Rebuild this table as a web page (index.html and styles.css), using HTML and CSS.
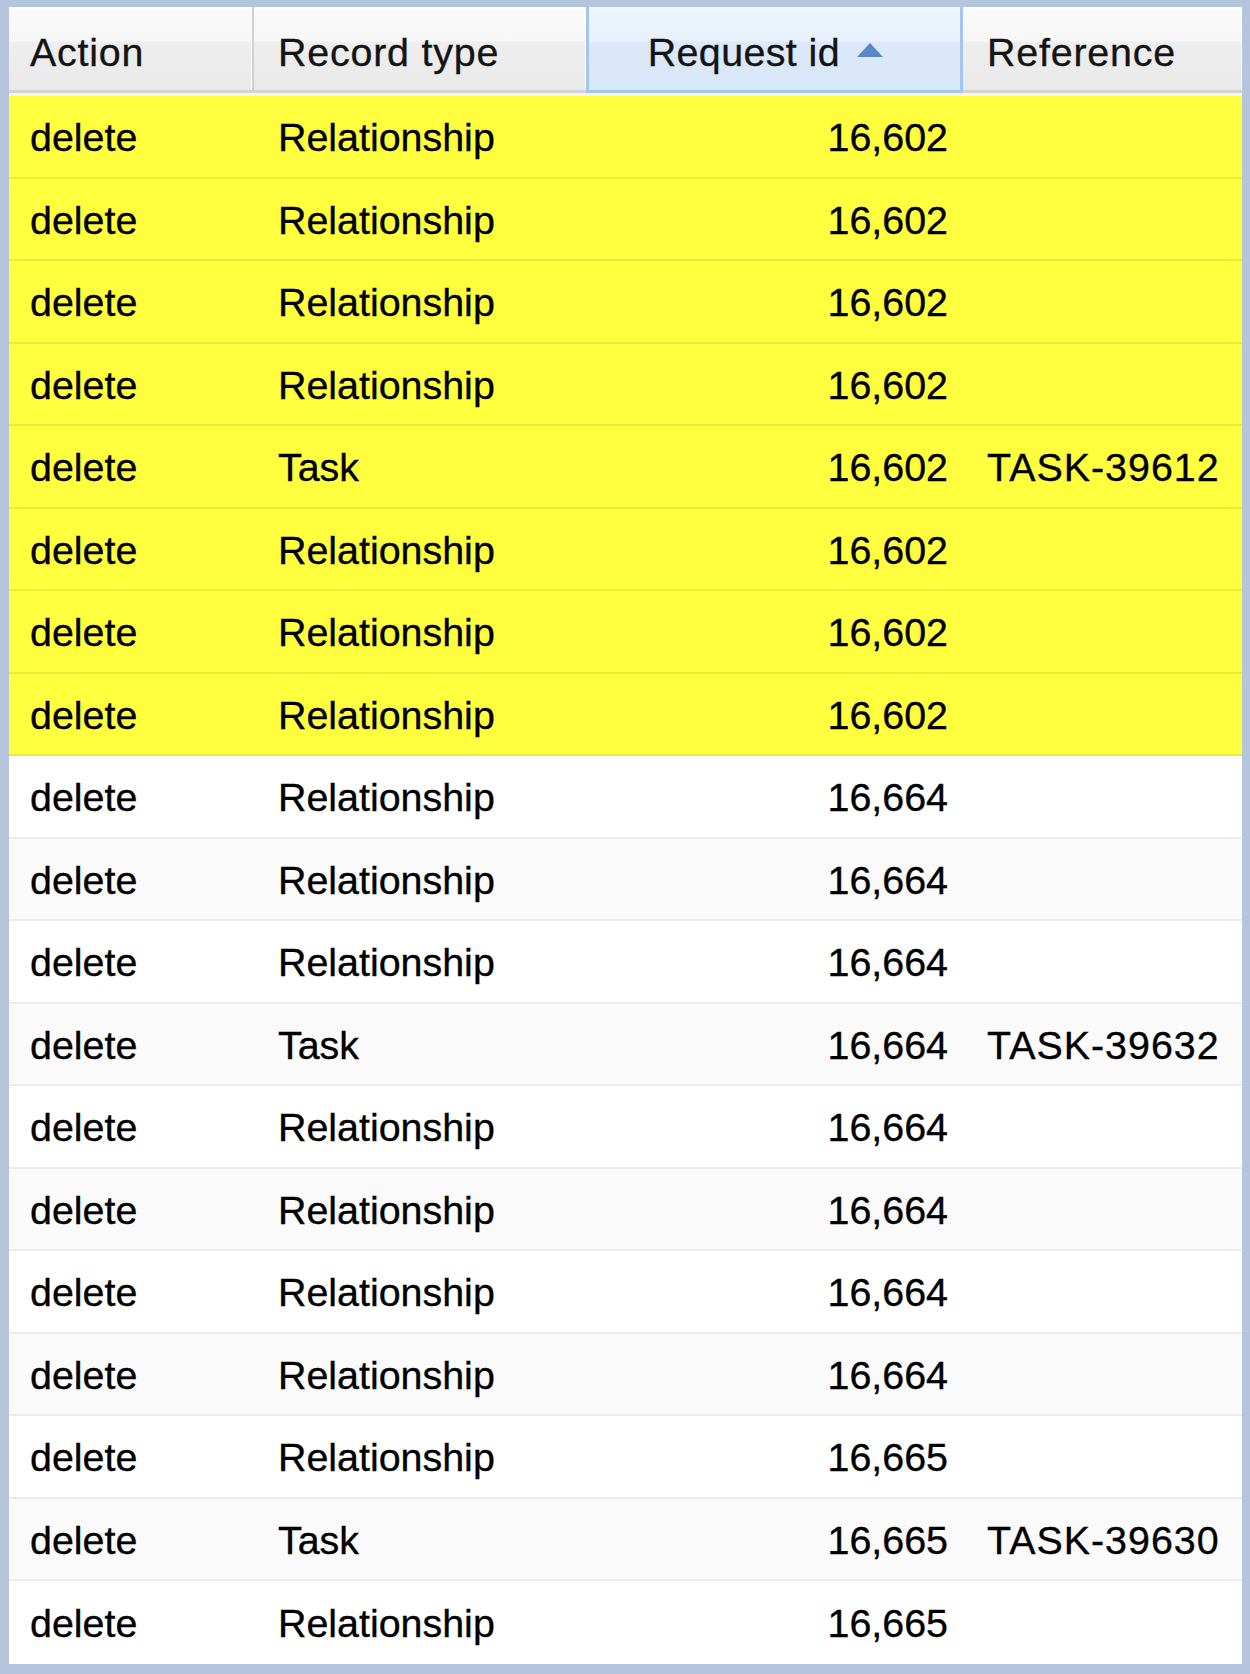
FILE: index.html
```html
<!DOCTYPE html>
<html>
<head>
<meta charset="utf-8">
<link rel="stylesheet" href="styles.css">
</head>
<body>
<div class="grid">
  <div class="header">
    <div class="hcell c-action">Action</div>
    <div class="hcell c-type">Record type</div>
    <div class="hcell c-req sorted">Request id<svg class="sort" width="28" height="16" viewBox="0 0 28 16"><polygon points="14,1 27,15 1,15" fill="#5b87c9"/></svg></div>
    <div class="hcell c-ref last">Reference</div>
  </div>
  <div class="body">
    <div class="row hl"><div class="cell c-action">delete</div><div class="cell c-type">Relationship</div><div class="cell c-req">16,602</div><div class="cell c-ref"></div></div>
    <div class="row hl"><div class="cell c-action">delete</div><div class="cell c-type">Relationship</div><div class="cell c-req">16,602</div><div class="cell c-ref"></div></div>
    <div class="row hl"><div class="cell c-action">delete</div><div class="cell c-type">Relationship</div><div class="cell c-req">16,602</div><div class="cell c-ref"></div></div>
    <div class="row hl"><div class="cell c-action">delete</div><div class="cell c-type">Relationship</div><div class="cell c-req">16,602</div><div class="cell c-ref"></div></div>
    <div class="row hl"><div class="cell c-action">delete</div><div class="cell c-type">Task</div><div class="cell c-req">16,602</div><div class="cell c-ref">TASK-39612</div></div>
    <div class="row hl"><div class="cell c-action">delete</div><div class="cell c-type">Relationship</div><div class="cell c-req">16,602</div><div class="cell c-ref"></div></div>
    <div class="row hl"><div class="cell c-action">delete</div><div class="cell c-type">Relationship</div><div class="cell c-req">16,602</div><div class="cell c-ref"></div></div>
    <div class="row hl"><div class="cell c-action">delete</div><div class="cell c-type">Relationship</div><div class="cell c-req">16,602</div><div class="cell c-ref"></div></div>
    <div class="row"><div class="cell c-action">delete</div><div class="cell c-type">Relationship</div><div class="cell c-req">16,664</div><div class="cell c-ref"></div></div>
    <div class="row alt"><div class="cell c-action">delete</div><div class="cell c-type">Relationship</div><div class="cell c-req">16,664</div><div class="cell c-ref"></div></div>
    <div class="row"><div class="cell c-action">delete</div><div class="cell c-type">Relationship</div><div class="cell c-req">16,664</div><div class="cell c-ref"></div></div>
    <div class="row alt"><div class="cell c-action">delete</div><div class="cell c-type">Task</div><div class="cell c-req">16,664</div><div class="cell c-ref">TASK-39632</div></div>
    <div class="row"><div class="cell c-action">delete</div><div class="cell c-type">Relationship</div><div class="cell c-req">16,664</div><div class="cell c-ref"></div></div>
    <div class="row alt"><div class="cell c-action">delete</div><div class="cell c-type">Relationship</div><div class="cell c-req">16,664</div><div class="cell c-ref"></div></div>
    <div class="row"><div class="cell c-action">delete</div><div class="cell c-type">Relationship</div><div class="cell c-req">16,664</div><div class="cell c-ref"></div></div>
    <div class="row alt"><div class="cell c-action">delete</div><div class="cell c-type">Relationship</div><div class="cell c-req">16,664</div><div class="cell c-ref"></div></div>
    <div class="row"><div class="cell c-action">delete</div><div class="cell c-type">Relationship</div><div class="cell c-req">16,665</div><div class="cell c-ref"></div></div>
    <div class="row alt"><div class="cell c-action">delete</div><div class="cell c-type">Task</div><div class="cell c-req">16,665</div><div class="cell c-ref">TASK-39630</div></div>
    <div class="row last"><div class="cell c-action">delete</div><div class="cell c-type">Relationship</div><div class="cell c-req">16,665</div><div class="cell c-ref"></div></div>
  </div>
</div>
</body>
</html>
```

FILE: styles.css
```css
html, body {
  margin: 0;
  padding: 0;
  background: #b4c5dd;
}

.grid {
  width: 1250px;
  height: 1674px;
  box-sizing: border-box;
  border-style: solid;
  border-color: #b4c5dd;
  border-width: 7px 8px 10px 9px;
  background: #ffffff;
  font-family: "Liberation Sans", Arial, sans-serif;
  font-size: 39.4px;
  color: #000;
  overflow: hidden;
  -webkit-text-stroke: 0.35px currentColor;
}

.header {
  display: grid;
  grid-template-columns: 245px 334px 375px 1fr;
  height: 89px;
  box-sizing: border-box;
  border-bottom: 3px solid #f4f4f4;
  background: #f4f4f4;
}

.hcell {
  display: flex;
  align-items: center;
  box-sizing: border-box;
  height: 86px;
  padding-top: 7px;
  color: #141414;
  letter-spacing: 0.8px;
  background: linear-gradient(to bottom, #fafafa 0px, #f7f7f7 34px, #eeeeef 35px, #e9e9ea 100%);
  border-bottom: 3px solid #d3d3d3;
  border-right: 2px solid #d0d0d0;
  box-shadow: inset -1px 0 0 #ffffff, inset 0 3px 0 #ffffff;
  white-space: nowrap;
}

.hcell.last {
  border-right: none;
}

.hcell.sorted {
  justify-content: flex-end;
  padding-right: 76px;
  letter-spacing: 0.4px;
  background: linear-gradient(to bottom, #edf4fd 0px, #e9f1fc 34px, #dce9fa 35px, #d8e6f9 100%);
  border: 3px solid #a3c5ef;
  border-top: none;
  box-shadow: inset 0 3px 0 #f3f8fe;
  margin-left: -2px;
}

.sort {
  margin-left: 16px;
  margin-top: -4px;
}

.c-action { padding-left: 21px; }
.c-type { padding-left: 24px; }
.c-ref { padding-left: 24px; }
.cell.c-ref { letter-spacing: 1px; }
.cell.c-req { justify-content: flex-end; padding-right: 15px; }

.row {
  display: grid;
  grid-template-columns: 245px 334px 375px 1fr;
  height: 82.5px;
  box-sizing: border-box;
  border-bottom: 2px solid #ececec;
  background: #ffffff;
}

.row.alt {
  background: #fafafa;
}

.row.hl {
  background: #ffff3f;
  border-bottom-color: #ebeb3c;
}

.row.last {
  border-bottom: none;
}

.cell {
  display: flex;
  align-items: center;
  box-sizing: border-box;
  white-space: nowrap;
  padding-top: 3px;
}
```
